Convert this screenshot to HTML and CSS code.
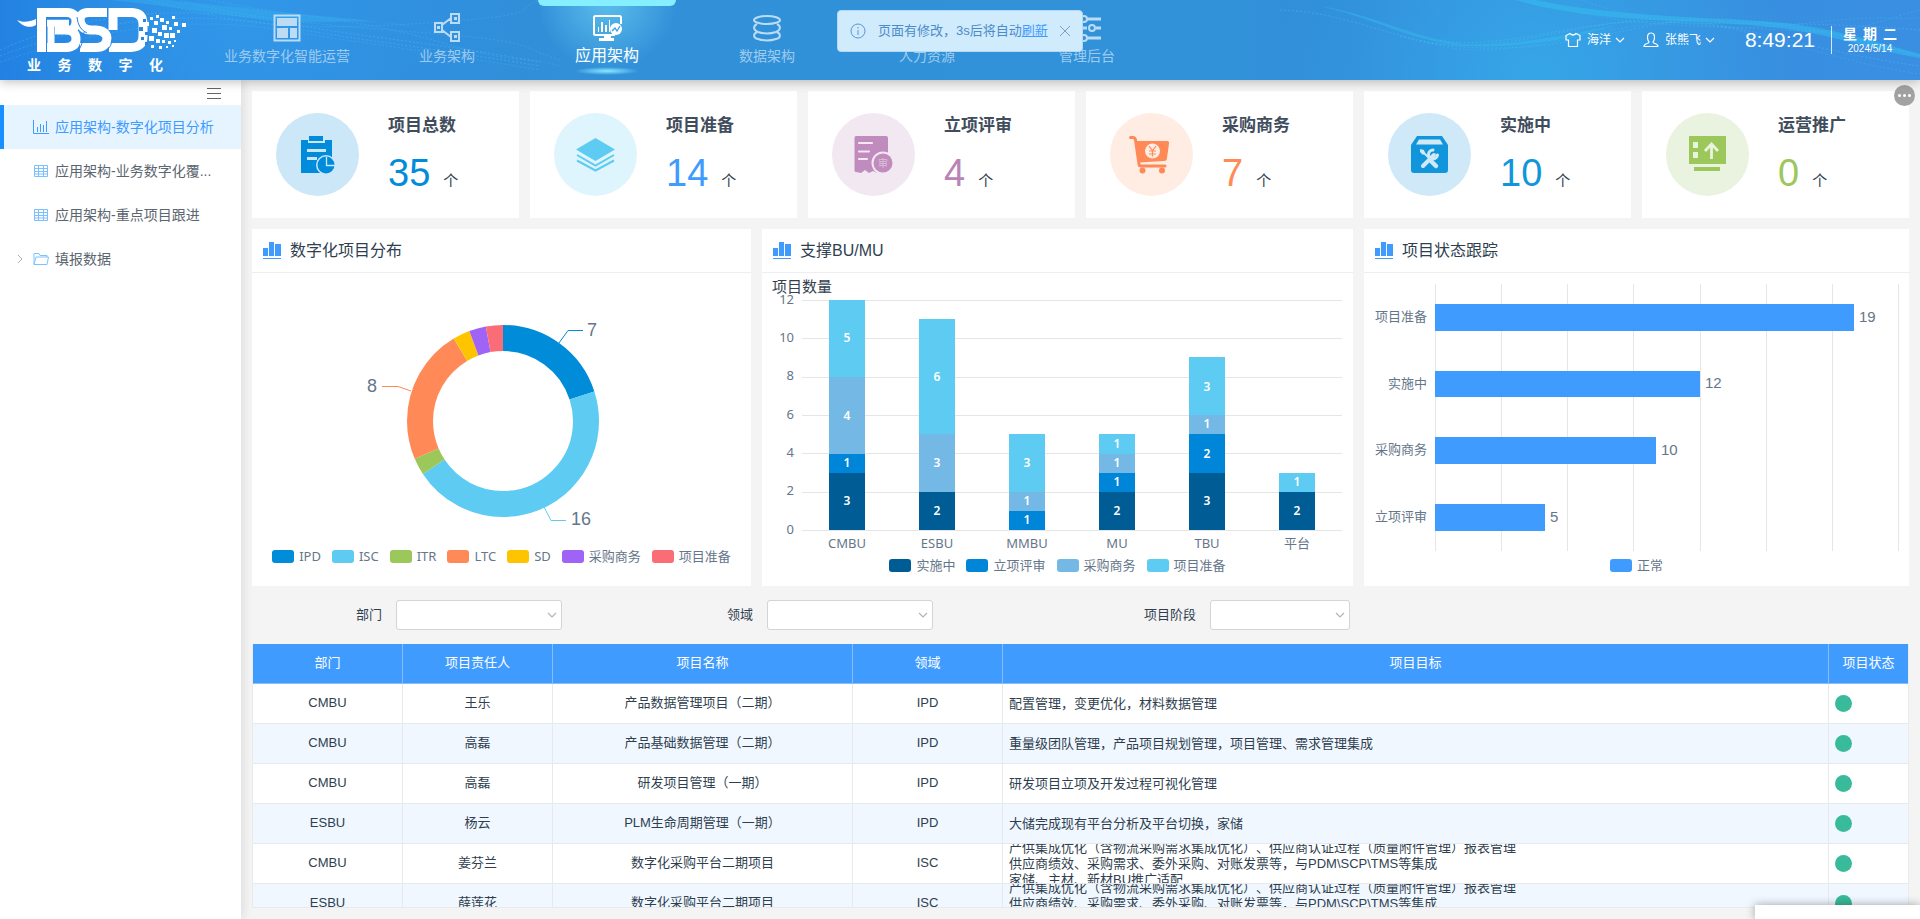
FILE: index.html
```html
<!DOCTYPE html>
<html lang="zh-CN">
<head>
<meta charset="utf-8">
<title>应用架构-数字化项目分析</title>
<link rel="stylesheet" href="styles.css">
</head>
<body>
<svg class="sprite" aria-hidden="true">
  <symbol id="i-bars" viewBox="0 0 20 18"><path d="M1 6h5v8H1zM7 0h5v14H7zM13 2h6v12h-6zM1 16h18v1H1z" fill="#409bff"/></symbol>
  <symbol id="i-table" viewBox="0 0 16 14"><path d="M1.500 1.500h13v11h-13zM1 4.500h14M1 7.500h14M1 10h14M5.500 1v12M10.500 1v12" fill="none" stroke="#7cc0ff"/></symbol>
  <symbol id="i-down" viewBox="0 0 10 6"><path d="M1 1l4 4 4-4" fill="none" stroke="currentColor" stroke-width="1.2"/></symbol>
</svg>

<header class="topbar">
  <svg class="waves" viewBox="0 0 1920 80" preserveAspectRatio="none" aria-hidden="true">
    <g fill="none" stroke="#4cc3f2" stroke-dasharray="2 2">
      <path opacity=".4" d="M0 50C90 10 190 5 280 22S420 40 540 62"/>
      <path opacity=".4" d="M0 56C100 18 190 10 280 26S420 46 540 66"/>
      <path opacity=".3" d="M0 62C110 26 190 16 280 30S420 50 540 70"/>
      <path opacity=".3" d="M150 0C250 30 330 30 440 22S510 10 540 0"/>
      <path opacity=".3" d="M180 0C260 22 340 26 440 34S520 48 560 60"/>
      <path opacity=".3" d="M210 0C280 16 350 16 440 42S520 54 560 66"/>
      <path opacity=".4" d="M1280 10C1360 12 1400 50 1500 48S1660 12 1740 20S1860 40 1920 56"/>
      <path opacity=".4" d="M1400 36C1480 62 1560 26 1640 20S1800 50 1920 66"/>
      <path opacity=".3" d="M1420 40C1490 66 1570 34 1650 24S1800 56 1920 74"/>
      <path opacity=".4" d="M1440 40C1500 52 1580 18 1660 22S1800 20 1920 30"/>
      <path opacity=".3" d="M1540 0C1620 30 1700 24 1780 30S1870 22 1920 10"/>
      <path opacity=".3" d="M1580 0C1640 20 1720 34 1800 24S1880 20 1920 18"/>
    </g>
    <path d="M1515 0C1600 24 1680 18 1760 26S1860 48 1920 58V54C1870 40 1820 24 1760 21S1600 14 1535 0Z" fill="#35bdf0" opacity=".55"/>
    <path d="M110 0C210 10 260 24 330 22S400 24 450 36C400 20 330 18 280 12S200 4 170 0Z" fill="#37b4f0" opacity=".4"/>
    <path d="M1320 6C1390 22 1420 50 1500 46S1590 28 1640 22C1580 30 1500 52 1450 42S1370 14 1320 6Z" fill="#35bdf0" opacity=".45"/>
  </svg>

  <div class="brand">
    <svg class="brand-mark" viewBox="0 0 170 46" role="img" aria-label="BSD">
      <g fill="none" stroke="#fff" stroke-width="9">
        <path d="M24.500 44V4.500H50Q59 5 59 13Q59 20 54 22"/>
        <path d="M29 15H52" stroke-width="7"/>
        <path d="M34 16V40" stroke-width="7"/>
        <path d="M30 39.500H49Q59 39 59 31Q59 22 48 22H38"/>
        <path d="M90 4.500H71Q63 5 63 12Q64 22 74 22H79Q90 23 90 31Q89 39.500 79 39.500H63"/>
        <path d="M96 22V4.500H115Q126 5 126 16V28Q126 39.500 114 39.500H92"/>
      </g>
      <path d="M29.500 45V11H52M60 9Q61 21 70 25M67 24Q66 38 60 44M90.500 0V20M89 44Q95 38 95.500 30" fill="none" stroke="#2b86e2"/>
      <path d="M0 12C6 15 12 14 19 11V17C12 21 5 18 0 12Z" fill="#fff"/>
      <path fill="#fff" d="M121 8h4v4h-4zM128 14h4v4h-4zM133 9h3v3h-3zM137 13h4v4h-4zM139 7h3v3h-3zM143 10h4v4h-4zM149 13h3v3h-3zM155 8h3v3h-3zM145 17h5v5h-5zM152 19h3v3h-3zM157 14h4v4h-4zM165 15h4v4h-4zM135 20h5v5h-5zM141 24h4v4h-4zM147 25h5v5h-5zM153 25h5v5h-5zM160 22h3v3h-3zM132 28h5v5h-5zM139 31h4v4h-4zM145 32h3v3h-3zM151 33h3v3h-3zM157 32h2v2h-2zM134 37h3v3h-3zM142 38h3v3h-3zM149 38h2v2h-2zM155 37h2v2h-2z"/>
      <path fill="#2b86e2" d="M126 11h3v3h-3zM122 19h4v4h-4zM128 24h3v3h-3zM124 29h3v3h-3zM128 34h3v3h-3z"/>
    </svg>
    <div class="brand-name"><span>业</span><span>务</span><span>数</span><span>字</span><span>化</span></div>
  </div>

  <nav class="mainnav">
    <a class="tab" href="#">
      <svg width="28" height="30" viewBox="0 0 28 30"><path d="M1.500 2.500h25v25h-25z" fill="none" stroke="#bcdcf5" stroke-width="2"/><path d="M4 5h20v8H4zM4 15h11v10H4zM17 15h7v10h-7z" fill="#bcdcf5"/></svg>
      <span>业务数字化智能运营</span></a>
    <a class="tab" href="#">
      <svg width="28" height="30" viewBox="0 0 28 30"><g fill="none" stroke="#bcdcf5" stroke-width="2"><path d="M2 10h7v9H2zM18 1h8v9h-8zM18 19h8v9h-8zM9 12l9-7M9 17l9 7"/></g><path d="M4 13h3v3H4zM21 4h3v3h-3zM21 22h3v3h-3z" fill="#bcdcf5"/></svg>
      <span>业务架构</span></a>
    <a class="tab active" href="#">
      <svg width="30" height="30" viewBox="0 0 30 30"><path d="M23 22H3.500Q2 22 2 20.500V4.500Q2 3 3.500 3h24Q29 3 29 4.500V11" fill="none" stroke="#fff" stroke-width="2"/><path d="M6 14h1v5H6zM9 9h2v10H9zM13 12h2v7h-2zM17 7h1v12h-1zM12 22h7v3h3v3H7v-3h5z" fill="#fff"/><circle cx="24" cy="16" r="6" fill="#fff"/><path d="M20 18l3-3 2 3 3-5" fill="none" stroke="#3aa0e0" stroke-width="1.300"/></svg>
      <span>应用架构</span></a>
    <a class="tab" href="#">
      <svg width="30" height="30" viewBox="0 0 30 30"><g fill="none" stroke="#bcdcf5" stroke-width="2"><ellipse cx="15" cy="7" rx="13" ry="4"/><path d="M5 11C1 13 1 17 6 19C12 21 18 21 24 19C29 17 29 13 25 11"/><path d="M5 19C1 21 1 25 6 26C12 28 18 28 24 26C29 25 29 21 25 19"/></g></svg>
      <span>数据架构</span></a>
    <a class="tab" href="#">
      <svg width="30" height="30" viewBox="0 0 30 30"><g fill="none" stroke="#bcdcf5" stroke-width="2"><circle cx="15" cy="9" r="6"/><path d="M4 27Q5 17 15 17T26 27Z"/></g></svg>
      <span>人力资源</span></a>
    <a class="tab" href="#">
      <svg width="28" height="30" viewBox="0 0 28 30"><g fill="none" stroke="#bcdcf5" stroke-width="3"><path d="M0 6h8M14 6h14M0 15h14M23 15h5M0 25h8M14 25h14"/><circle cx="11" cy="6" r="3" stroke-width="2"/><circle cx="19" cy="15" r="3" stroke-width="2"/><circle cx="11" cy="25" r="3" stroke-width="2"/></g></svg>
      <span>管理后台</span></a>
  </nav>

  <div class="tools">
    <button class="tool" type="button"><svg width="16" height="16" viewBox="0 0 16 16"><path d="M5 1.500Q8 4.500 11 1.500L15 3.500V8H12.500V14.500H3.500V8H1V3.500Z" fill="none" stroke="#fff" stroke-width="1.200"/></svg><span>海洋</span><svg class="caret" width="10" height="6"><use href="#i-down"/></svg></button>
    <button class="tool" type="button"><svg width="16" height="16" viewBox="0 0 16 16"><path d="M8 1C5 1 4.500 3 4.500 5.500Q4.500 8.500 6 10Q6 11 4 11.500Q1 12.500 1 14.500H15Q15 12.500 12 11.500Q10 11 10 10Q11.500 8.500 11.500 5.500C11.500 3 11 1 8 1Z" fill="none" stroke="#fff" stroke-width="1.200"/></svg><span>张熊飞</span><svg class="caret" width="10" height="6"><use href="#i-down"/></svg></button>
    <time class="clock">8:49:21</time>
    <div class="date">
      <div class="weekday"><span>星</span><span>期</span><span>二</span></div>
      <div class="day">2024/5/14</div>
    </div>
  </div>

  <div class="notice" role="status">
    <svg width="16" height="16" viewBox="0 0 16 16"><circle cx="8" cy="8" r="7" fill="none" stroke="#5b93d6"/><path d="M7.500 4h1v1.500h-1zM7.500 7h1v5h-1z" fill="#5b93d6"/></svg>
    <span>页面有修改，3s后将自动<a href="#">刷新</a></span>
    <button type="button" aria-label="关闭"><svg width="12" height="12" viewBox="0 0 12 12"><path d="M1 1l10 10M11 1L1 11" fill="none" stroke="#7f9cc4"/></svg></button>
  </div>
</header>

<div class="shell">
  <aside class="sidebar">
    <button class="fold" type="button" aria-label="折叠菜单"><svg width="14" height="12" viewBox="0 0 14 12"><path d="M0 .5h14M0 5.500h14M0 10.500h14" stroke="#666"/></svg></button>
    <a class="side-item active" href="#"><svg width="16" height="14" viewBox="0 0 16 14"><path d="M.5 0v13.500H16M4.500 7v5M7.500 4v8M10.500 5v7M13.500 1v11" fill="none" stroke="#409bff"/></svg><span>应用架构-数字化项目分析</span></a>
    <a class="side-item" href="#"><svg width="16" height="14"><use href="#i-table"/></svg><span>应用架构-业务数字化覆...</span></a>
    <a class="side-item" href="#"><svg width="16" height="14"><use href="#i-table"/></svg><span>应用架构-重点项目跟进</span></a>
    <a class="side-item folder" href="#"><svg class="expand" width="6" height="10" viewBox="0 0 6 10"><path d="M1 1l4 4-4 4" fill="none" stroke="#b0b0b0"/></svg><svg width="16" height="14" viewBox="0 0 16 14"><path d="M1 12.500V1.500h5l1 2h7V5M1 12.500L3 5h12.500L14 12.500Z" fill="none" stroke="#7cc4ff"/></svg><span>填报数据</span></a>
  </aside>

  <main class="content">
    <button class="more" type="button" aria-label="更多"><i></i><i></i><i></i></button>

    <section class="cards">
      <article class="card c-total">
        <svg class="badge" viewBox="0 0 83 83"><circle cx="41.500" cy="41.500" r="41.500" fill="#cce7f7"/><path d="M25 27h7v3h17v-3h7v33H25z" fill="#008cdb"/><path d="M33 23h14v5H33z" fill="#008cdb"/><path d="M31 36h19v3H31zM31 44h10v3H31z" fill="#cce7f7"/><circle cx="50" cy="52" r="10" fill="#cce7f7"/><circle cx="50" cy="52" r="8.500" fill="#008cdb"/><path d="M50.500 44v8.500H59" fill="none" stroke="#cce7f7" stroke-width="1.300"/></svg>
        <div><h3>项目总数</h3><p><b>35</b><span>个</span></p></div>
      </article>
      <article class="card c-prep">
        <svg class="badge" viewBox="0 0 83 83"><circle cx="41.500" cy="41.500" r="41.500" fill="#dff5fe"/><path d="M41.500 25L61 36.500L41.500 48L22 36.500Z" fill="#5dcbf2"/><path d="M23 42l18.500 10.500L60 42M23 47.500l18.500 10L60 47.500" fill="none" stroke="#5dcbf2" stroke-width="2"/></svg>
        <div><h3>项目准备</h3><p><b>14</b><span>个</span></p></div>
      </article>
      <article class="card c-review">
        <svg class="badge" viewBox="0 0 83 83"><circle cx="41.500" cy="41.500" r="41.500" fill="#f2e8f2"/><path d="M24 23h30q2 0 2 2v35H52l-3-2-4 2-4-2-4 2-4-3-4 3-5-1q-1.500 0-1.500-1.500V25q0-2 1.500-2z" fill="#c08bbd"/><path d="M27 30h13M27 38.500h10M27 46h8" stroke="#f2e8f2" stroke-width="2.200" stroke-linecap="round"/><circle cx="51" cy="50" r="11.500" fill="#f2e8f2"/><circle cx="51" cy="50" r="9.500" fill="#c08bbd"/><text x="51" y="54" font-size="10" text-anchor="middle" fill="#dcc0da">审</text></svg>
        <div><h3>立项评审</h3><p><b>4</b><span>个</span></p></div>
      </article>
      <article class="card c-buy">
        <svg class="badge" viewBox="0 0 83 83"><circle cx="41.500" cy="41.500" r="41.500" fill="#ffede4"/><path d="M20.500 24.500H23Q25 24.500 25.500 27L29 51Q29 53 31 53H55" fill="none" stroke="#ff8a57" stroke-width="3" stroke-linecap="round"/><path d="M26 28H57Q59.500 28 59 30.500L57 45Q57 48 54 48L29 49.500Z" fill="#ff8a57"/><circle cx="32.500" cy="57.500" r="3" fill="#ff8a57"/><circle cx="52" cy="57.500" r="3" fill="#ff8a57"/><circle cx="42.500" cy="38" r="7.500" fill="#ffede4"/><path d="M39 33l3.500 4.500L46 33M42.500 37.500V43.500M39 38h7M39 41h7" fill="none" stroke="#ff8a57" stroke-width="1.200"/></svg>
        <div><h3>采购商务</h3><p><b>7</b><span>个</span></p></div>
      </article>
      <article class="card c-doing">
        <svg class="badge" viewBox="0 0 83 83"><circle cx="41.500" cy="41.500" r="41.500" fill="#cfe9f8"/><path d="M29 23H54L60 32V57Q60 60 57 60H26Q23 60 23 57V32Z" fill="#1296db"/><path d="M31 26.500H52L55 31.500H28Z" fill="#cfe9f8"/><g stroke="#cfe9f8" fill="none" stroke-linecap="round"><path d="M35 53L46 42" stroke-width="4"/><path d="M35 39L40 44" stroke-width="2"/><path d="M43 48L48 53" stroke-width="4.500"/><path d="M45 37a4.500 4.500 0 1 0 4.500 5" stroke-width="3"/></g><path d="M32 36l4 1 1 3-2 2-3-3z" fill="#cfe9f8"/></svg>
        <div><h3>实施中</h3><p><b>10</b><span>个</span></p></div>
      </article>
      <article class="card c-promo">
        <svg class="badge" viewBox="0 0 83 83"><circle cx="41.500" cy="41.500" r="41.500" fill="#eaf3df"/><path d="M23 23h37v28H23zM28 54h26v4H28z" fill="#9cc75b"/><path d="M27 29h5v6h-5zM27 39h5v6h-5z" fill="#eaf3df"/><path d="M45.500 46V31M39 38l6.500-7 6.500 7" fill="none" stroke="#eaf3df" stroke-width="2.800"/></svg>
        <div><h3>运营推广</h3><p><b>0</b><span>个</span></p></div>
      </article>
    </section>

    <section class="panels">
      <article class="panel">
        <h2><svg width="20" height="18"><use href="#i-bars"/></svg>数字化项目分布</h2>
        <svg class="chart" viewBox="0 0 499 271" role="img" aria-label="数字化项目分布">
          <g transform="rotate(-90 251 148)" fill="none" stroke-width="26">
            <circle cx="251" cy="148" r="83" pathLength="35" stroke="#008cd8" stroke-dasharray="7 28"/>
            <circle cx="251" cy="148" r="83" pathLength="35" stroke="#5dcbf2" stroke-dasharray="16 19" stroke-dashoffset="-7"/>
            <circle cx="251" cy="148" r="83" pathLength="35" stroke="#9cc75b" stroke-dasharray="1 34" stroke-dashoffset="-23"/>
            <circle cx="251" cy="148" r="83" pathLength="35" stroke="#ff8a57" stroke-dasharray="8 27" stroke-dashoffset="-24"/>
            <circle cx="251" cy="148" r="83" pathLength="35" stroke="#ffc400" stroke-dasharray="1 34" stroke-dashoffset="-32"/>
            <circle cx="251" cy="148" r="83" pathLength="35" stroke="#9f63f5" stroke-dasharray="1 34" stroke-dashoffset="-33"/>
            <circle cx="251" cy="148" r="83" pathLength="35" stroke="#fa6d76" stroke-dasharray="1 34" stroke-dashoffset="-34"/>
          </g>
          <g fill="none"><path d="M307 70L316 57.500H331" stroke="#008cd8"/><path d="M292 234L299 247.500H314" stroke="#5dcbf2"/><path d="M159 118L146 113.500H130" stroke="#ff8a57"/></g>
          <g class="pie-label"><text x="335" y="63">7</text><text x="319" y="252">16</text><text x="125" y="119" text-anchor="end">8</text></g>
        </svg>
        <ul class="legend">
          <li><i class="k-ipd"></i>IPD</li><li><i class="k-isc"></i>ISC</li><li><i class="k-itr"></i>ITR</li><li><i class="k-ltc"></i>LTC</li><li><i class="k-sd"></i>SD</li><li><i class="k-buy"></i>采购商务</li><li><i class="k-prep"></i>项目准备</li>
        </ul>
      </article>

      <article class="panel">
        <h2><svg width="20" height="18"><use href="#i-bars"/></svg>支撑BU/MU</h2>
        <svg class="chart" viewBox="0 0 591 280" role="img" aria-label="支撑BU/MU">
          <text class="axis-title" x="10" y="19">项目数量</text>
          <path d="M40 27.500H580M40 65.500H580M40 104.500H580M40 142.500H580M40 180.500H580M40 219.500H580M40 257.500H580" stroke="#e6e6e6"/>
          <g class="tick" text-anchor="end"><text x="32" y="31">12</text><text x="32" y="69">10</text><text x="32" y="107">8</text><text x="32" y="146">6</text><text x="32" y="184">4</text><text x="32" y="222">2</text><text x="32" y="261">0</text></g>
          <g fill="#005c94"><path d="M67 200h36v57H67zM157 219h36v38h-36zM337 219h36v38h-36zM427 200h36v57h-36zM517 219h36v38h-36z"/></g>
          <g fill="#0086d9"><path d="M67 181h36v19H67zM247 238h36v19h-36zM337 200h36v19h-36zM427 161h36v39h-36z"/></g>
          <g fill="#74b9e6"><path d="M67 104h36v77H67zM157 161h36v58h-36zM247 219h36v19h-36zM337 181h36v19h-36zM427 142h36v19h-36z"/></g>
          <g fill="#5dcbf2"><path d="M67 27h36v77H67zM157 46h36v115h-36zM247 161h36v58h-36zM337 161h36v20h-36zM427 84h36v58h-36zM517 200h36v19h-36z"/></g>
          <g class="bar-label" text-anchor="middle">
            <text x="85" y="232">3</text><text x="85" y="194">1</text><text x="85" y="147">4</text><text x="85" y="69">5</text>
            <text x="175" y="242">2</text><text x="175" y="194">3</text><text x="175" y="108">6</text>
            <text x="265" y="251">1</text><text x="265" y="232">1</text><text x="265" y="194">3</text>
            <text x="355" y="242">2</text><text x="355" y="213">1</text><text x="355" y="194">1</text><text x="355" y="175">1</text>
            <text x="445" y="232">3</text><text x="445" y="185">2</text><text x="445" y="155">1</text><text x="445" y="118">3</text>
            <text x="535" y="242">2</text><text x="535" y="213">1</text>
          </g>
          <g class="tick" text-anchor="middle"><text x="85" y="275">CMBU</text><text x="175" y="275">ESBU</text><text x="265" y="275">MMBU</text><text x="355" y="275">MU</text><text x="445" y="275">TBU</text><text x="535" y="275">平台</text></g>
        </svg>
        <ul class="legend">
          <li><i class="k-s1"></i>实施中</li><li><i class="k-s2"></i>立项评审</li><li><i class="k-s3"></i>采购商务</li><li><i class="k-isc"></i>项目准备</li>
        </ul>
      </article>

      <article class="panel">
        <h2><svg width="20" height="18"><use href="#i-bars"/></svg>项目状态跟踪</h2>
        <svg class="chart" viewBox="0 0 545 280" role="img" aria-label="项目状态跟踪">
          <path d="M71.500 11V278M137.500 11V278M203.500 11V278M269.500 11V278M336.500 11V278M402.500 11V278M468.500 11V278M534.500 11V278" stroke="#e6e6e6"/>
          <path d="M71 31h419v27H71zM71 98h265v26H71zM71 164h221v27H71zM71 231h110v27H71z" fill="#409bff"/>
          <g class="tick" text-anchor="end"><text x="63" y="48">项目准备</text><text x="63" y="115">实施中</text><text x="63" y="181">采购商务</text><text x="63" y="248">立项评审</text></g>
          <g class="value"><text x="495" y="49">19</text><text x="341" y="115">12</text><text x="297" y="182">10</text><text x="186" y="249">5</text></g>
        </svg>
        <ul class="legend"><li><i class="k-ok"></i>正常</li></ul>
      </article>
    </section>

    <form class="filters">
      <div class="field"><label for="f-dept">部门</label><div class="select wide"><select id="f-dept"><option></option></select><svg width="10" height="6"><use href="#i-down"/></svg></div></div>
      <div class="field"><label for="f-area">领域</label><div class="select wide"><select id="f-area"><option></option></select><svg width="10" height="6"><use href="#i-down"/></svg></div></div>
      <div class="field"><label for="f-stage">项目阶段</label><div class="select"><select id="f-stage"><option></option></select><svg width="10" height="6"><use href="#i-down"/></svg></div></div>
    </form>

    <div class="table-wrap">
      <table>
        <colgroup><col class="w-m"><col class="w-m"><col class="w-l"><col class="w-m"><col><col class="w-s"></colgroup>
        <thead><tr><th>部门</th><th>项目责任人</th><th>项目名称</th><th>领域</th><th>项目目标</th><th>项目状态</th></tr></thead>
        <tbody>
          <tr><td>CMBU</td><td>王乐</td><td>产品数据管理项目（二期）</td><td>IPD</td><td><div class="goal">配置管理，变更优化，材料数据管理</div></td><td><i class="dot"></i></td></tr>
          <tr><td>CMBU</td><td>高磊</td><td>产品基础数据管理（二期）</td><td>IPD</td><td><div class="goal">重量级团队管理，产品项目规划管理，项目管理、需求管理集成</div></td><td><i class="dot"></i></td></tr>
          <tr><td>CMBU</td><td>高磊</td><td>研发项目管理（一期）</td><td>IPD</td><td><div class="goal">研发项目立项及开发过程可视化管理</div></td><td><i class="dot"></i></td></tr>
          <tr><td>ESBU</td><td>杨云</td><td>PLM生命周期管理（一期）</td><td>IPD</td><td><div class="goal">大储完成现有平台分析及平台切换，家储</div></td><td><i class="dot"></i></td></tr>
          <tr><td>CMBU</td><td>姜芬兰</td><td>数字化采购平台二期项目</td><td>ISC</td><td><div class="goal">产供集成优化（含物流采购需求集成优化）、供应商认证过程（质量附件管理）报表管理<br>供应商绩效、采购需求、委外采购、对账发票等，与PDM\SCP\TMS等集成<br>家储、主材、新材BU推广适配</div></td><td><i class="dot"></i></td></tr>
          <tr><td>ESBU</td><td>薛莲花</td><td>数字化采购平台二期项目</td><td>ISC</td><td><div class="goal">产供集成优化（含物流采购需求集成优化）、供应商认证过程（质量附件管理）报表管理<br>供应商绩效、采购需求、委外采购、对账发票等，与PDM\SCP\TMS等集成<br>家储、主材、新材BU推广适配</div></td><td><i class="dot"></i></td></tr>
        </tbody>
      </table>
    </div>
  </main>
</div>
<div class="drawer"></div>
</body>
</html>
```

FILE: styles.css
```css
* { box-sizing: border-box; }
body {
  margin: 0;
  height: 100vh;
  display: flex;
  flex-direction: column;
  overflow: hidden;
  background: #f4f4f4;
  color: #2f3f50;
  font: 13px/20px "Liberation Sans", "Noto Sans CJK SC", sans-serif;
  text-spacing-trim: space-all;
}
h2, h3, p, ul { margin: 0; padding: 0; }
a { color: inherit; text-decoration: none; }
i { font-style: normal; }
button { border: 0; padding: 0; background: none; color: inherit; font: inherit; cursor: pointer; }
svg { flex: none; display: block; }
.sprite { position: absolute; width: 0; height: 0; }

/* top bar */
.topbar {
  position: relative;
  z-index: 2;
  flex: none;
  height: 80px;
  display: flex;
  color: #fff;
  background:
    radial-gradient(circle 260px at 80% 100%, #36a6e8, rgba(54, 166, 232, 0)),
    radial-gradient(circle 300px at 12% 0, rgba(50, 156, 236, .8), rgba(50, 156, 236, 0)),
    linear-gradient(90deg, #1f7ce0 0, #2f88dd 14%, #3190d8 30%, #3192d9 64%, #318cd8 70%, #3a8fe2 100%);
  box-shadow: 0 2px 10px rgba(0, 0, 0, .25);
}
.waves { position: absolute; inset: 0; width: 100%; height: 100%; }
.brand { position: relative; flex: none; width: 207px; padding: 8px 20px 0 17px; }
.brand-mark { width: 170px; height: 46px; }
.brand-name {
  display: flex;
  justify-content: space-between;
  width: 136px;
  margin-left: 10px;
  font-size: 14px;
  line-height: 22px;
  font-weight: 700;
}
.mainnav { position: relative; display: flex; }
.tab {
  width: 160px;
  padding-top: 13px;
  display: flex;
  flex-direction: column;
  align-items: center;
  color: #9dcbf0;
  font-size: 14px;
  line-height: 26px;
}
.tab.active {
  position: relative;
  color: #fff;
  font-size: 16px;
  background:
    radial-gradient(ellipse 32px 4px at 50% 71px, #8ceaff, rgba(140, 234, 255, 0)),
    radial-gradient(ellipse 70px 70px at 50% 0, rgba(110, 210, 245, .7), rgba(110, 210, 245, 0));
}
.tab.active::before {
  content: "";
  position: absolute;
  top: 0;
  left: 11px;
  right: 11px;
  height: 6px;
  border-radius: 0 0 6px 6px;
  background: #86efff;
}
.tools {
  position: relative;
  margin-left: auto;
  padding-right: 23px;
  display: flex;
  align-items: center;
}
.tool { display: flex; align-items: center; gap: 6px; margin-right: 18px; font-size: 12px; }
.tool .caret { margin-left: -2px; }
.clock { margin: 0 16px 0 12px; font-size: 21px; line-height: 28px; }
.date { border-left: 1px solid rgba(255, 255, 255, .8); padding-left: 11px; height: 28px; }
.weekday { display: flex; gap: 6px; font-size: 14px; line-height: 17px; font-weight: 700; }
.day { font-size: 10px; line-height: 11px; text-align: center; }
.notice {
  position: absolute;
  top: 10px;
  left: 837px;
  width: 246px;
  height: 42px;
  padding: 0 11px 0 12px;
  display: flex;
  align-items: center;
  border: 1px solid #b5d8f5;
  border-radius: 4px;
  background: #d0ebfb;
  color: #4a8cca;
}
.notice span { margin: 0 auto 0 12px; white-space: nowrap; }
.notice a { color: #409bff; text-decoration: underline; }

/* side menu */
.shell { flex: 1; min-height: 0; display: flex; }
.sidebar { flex: none; width: 241px; background: #fff; box-shadow: 2px 0 10px rgba(0, 0, 0, .1); }
.fold { display: flex; height: 25px; margin: 0 20px 0 auto; padding-top: 8px; }
.side-item {
  position: relative;
  display: flex;
  align-items: center;
  gap: 6px;
  height: 44px;
  padding-left: 33px;
  color: #5c6670;
  font-size: 14px;
}
.side-item.active { padding-left: 29px; border-left: 4px solid #1890ff; background: #e6f4ff; color: #409bff; }
.side-item.folder { padding-left: 17px; }
.side-item .expand { margin-right: 4px; }

/* content */
.content {
  position: relative;
  flex: 1;
  min-width: 0;
  display: flex;
  flex-direction: column;
  padding: 11px;
}
.more {
  position: absolute;
  top: 5px;
  right: 5px;
  width: 21px;
  height: 21px;
  display: flex;
  align-items: center;
  justify-content: center;
  gap: 2px;
  border-radius: 50%;
  background: #a2a2a2;
}
.more i { width: 3px; height: 3px; border-radius: 50%; background: #fff; }
.cards { display: grid; grid-template-columns: repeat(6, 1fr); gap: 11px; }
.card { display: flex; gap: 29px; min-height: 127px; padding: 22px 24px 12px; background: #fff; }
.badge { width: 83px; height: 83px; }
.card h3 { font-size: 17px; line-height: 26px; font-weight: 700; color: #3f4d5c; }
.card p { display: flex; align-items: baseline; gap: 13px; margin-top: 11px; line-height: 46px; font-size: 15px; }
.card b { font-size: 38px; font-weight: 400; }
.c-total b { color: #008cdb; }
.c-prep b { color: #409bff; }
.c-review b { color: #b884b8; }
.c-buy b { color: #ff8a57; }
.c-doing b { color: #1296db; }
.c-promo b { color: #9cc75b; }

.panels { display: grid; grid-template-columns: 499fr 591fr 545fr; gap: 11px; margin-top: 11px; }
.panel { min-width: 0; padding-bottom: 9px; background: #fff; }
.panel h2 {
  display: flex;
  align-items: center;
  gap: 8px;
  height: 44px;
  padding: 1px 10px 0;
  border-bottom: 1px solid #ebeef2;
  font-size: 16px;
  font-weight: 400;
}
.chart { width: 100%; height: auto; font-family: "Noto Sans", "Noto Sans CJK SC", sans-serif; }
.tick { font-size: 13px; fill: #66768a; }
.axis-title { font-size: 15px; fill: #33414f; }
.bar-label { font-size: 12px; font-weight: 600; fill: #fff; }
.value { font: 15px "Liberation Sans", sans-serif; fill: #66768a; }
.pie-label { font: 18px "Liberation Sans", sans-serif; fill: #66768a; }
.legend {
  display: flex;
  justify-content: center;
  gap: 11px;
  list-style: none;
  color: #66768a;
  font: 13px/24px "Noto Sans", "Noto Sans CJK SC", sans-serif;
}
.legend li { display: flex; align-items: center; gap: 5px; white-space: nowrap; }
.legend i { width: 22px; height: 13px; border-radius: 3px; }
.k-ipd { background: #008cd8; }
.k-isc { background: #5dcbf2; }
.k-itr { background: #9cc75b; }
.k-ltc { background: #ff8a57; }
.k-sd { background: #ffc400; }
.k-buy { background: #9f63f5; }
.k-prep { background: #fa6d76; }
.k-s1 { background: #005c94; }
.k-s2 { background: #0086d9; }
.k-s3 { background: #74b9e6; }
.k-ok { background: #409bff; }

.filters { display: grid; grid-template-columns: 310fr 371fr 417fr 559fr; margin: 14px 0; }
.field { display: flex; align-items: center; justify-content: flex-end; gap: 14px; }
.select { position: relative; width: 140px; color: #b0b4bb; }
.select.wide { width: 166px; }
.select select {
  display: block;
  width: 100%;
  height: 30px;
  border: 1px solid #d4d4d4;
  border-radius: 3px;
  background: #fff;
  appearance: none;
}
.select svg { position: absolute; right: 5px; top: 12px; pointer-events: none; }

.table-wrap { flex: 1; min-height: 0; overflow: hidden; border: 1px solid #e8eaec; border-top: 0; }
table { width: 100%; table-layout: fixed; border-collapse: separate; border-spacing: 0; }
.w-s { width: 79px; }
.w-m { width: 150px; }
.w-l { width: 300px; }
th, td { height: 40px; padding: 0 6px 1px; text-align: center; border-right: 1px solid #e6e9ed; border-bottom: 1px solid #e6e9ed; }
th { background: #409bff; color: #fff; font-weight: 400; border-color: #8abcf5; }
th:last-child, td:last-child { border-right: 0; }
td { background: #fff; }
tr:nth-child(even) td { background: #f0f7ff; }
td:nth-child(5) { padding: 0 6px; }
.goal {
  height: 39px;
  display: flex;
  flex-direction: column;
  justify-content: center;
  overflow: hidden;
  text-align: left;
  line-height: 16px;
}
.dot { display: block; width: 17px; height: 17px; border-radius: 50%; background: #38ba9b; }

.drawer {
  position: fixed;
  right: 0;
  bottom: 0;
  width: 165px;
  height: 14px;
  background: #fff;
  box-shadow: 0 0 10px rgba(0, 0, 0, .35);
}
```
